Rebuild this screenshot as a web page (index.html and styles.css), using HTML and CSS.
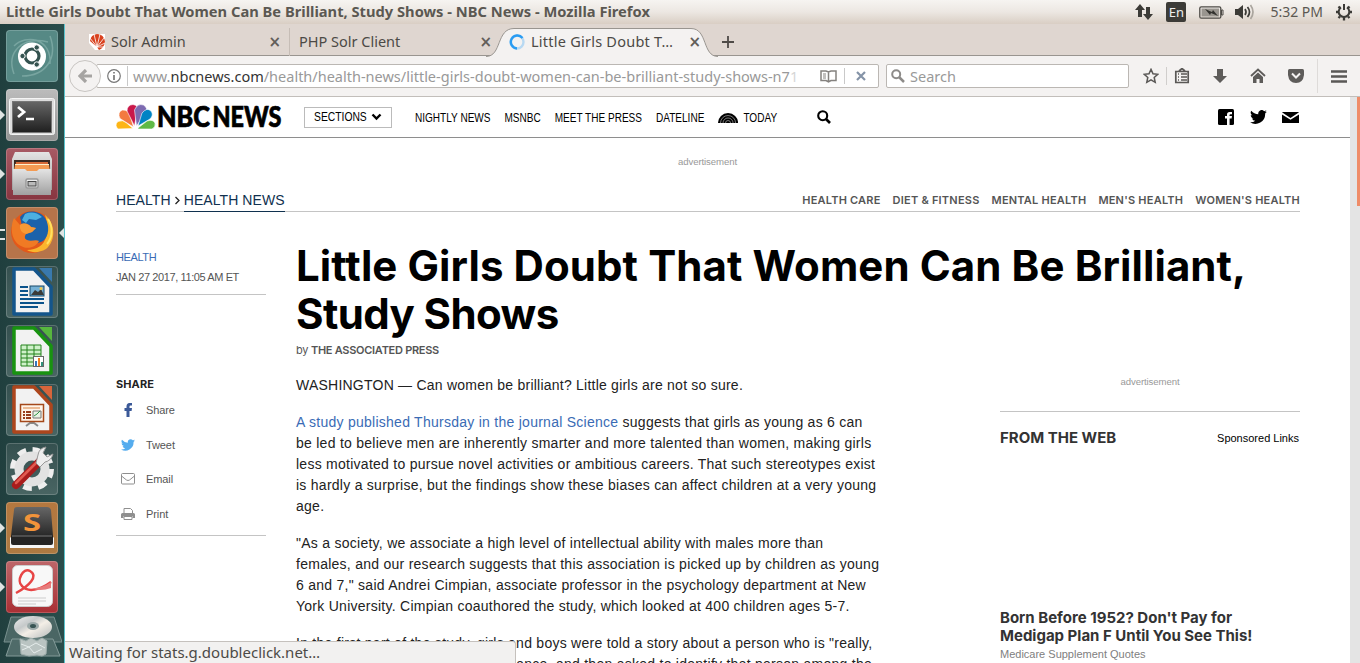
FILE: index.html
```html
<!DOCTYPE html>
<html lang="en">
<head>
<meta charset="utf-8">
<title>Little Girls Doubt That Women Can Be Brilliant, Study Shows - NBC News</title>
<link rel="stylesheet" href="styles.css">
</head>
<body>
<div class="desktop">
  <header class="panel">
    <span class="panel-title">Little Girls Doubt That Women Can Be Brilliant, Study Shows - NBC News - Mozilla Firefox</span>
    <div class="indicators">
      <svg width="18" height="18" viewBox="0 0 18 18" fill="#3c3b37"><path d="M5 1l5 6H7v7H3V7H0zM13 17l-5-6h3V4h4v7h3z"/></svg>
      <span class="lang">En</span>
      <svg class="battery" width="25" height="13" viewBox="0 0 25 13"><rect x=".8" y=".8" width="21" height="11.4" rx="1.5" fill="none" stroke="#4c4a46" stroke-width="1.3"/><rect x="2.5" y="2.5" width="17.600" height="8" fill="#99958f"/><path d="M22.500 4h1.500v5h-1.500z" fill="none" stroke="#4c4a46"/><path d="M6 3l7 3 1-2 5 6-7-3-1 2z" fill="#33322f"/></svg>
      <svg class="volume" width="20" height="18" viewBox="0 0 20 18"><path d="M0 6h3l5-4v14l-5-4H0z" fill="#3c3b37"/><g fill="none" stroke-width="1.700"><path d="M10 6q2 3 0 6M12.500 4q4 5 0 10" stroke="#3c3b37"/><path d="M15.500 2q5 7 0 14" stroke="#aaa59e"/></g></svg>
      <span class="clock">5:32 PM</span>
      <svg width="18" height="18" viewBox="0 0 18 18" fill="none" stroke="#3c3b37"><path d="M6 4.400a5.300 5.300 0 1 0 6 0" stroke-width="2"/><path d="M9 1v6" stroke-width="2"/><path d="M3.500 3.500l1.500 1.500M14.500 3.500L13 5M1 9h3M14 9h3M3.500 15l1.500-1.500M14.500 15L13 13.500M9 14v3.500" stroke-width="2.300"/></svg>
    </div>
  </header>

  <div class="workspace">
    <nav class="launcher">
      <svg width="0" height="0" class="defs"><defs>
        <linearGradient id="gray" x2="0" y2="1"><stop stop-color="#e4e4e4"/><stop offset="1" stop-color="#a0a0a0"/></linearGradient>
        <linearGradient id="dark" x2="0" y2="1"><stop stop-color="#666"/><stop offset="1" stop-color="#1f1f1f"/></linearGradient>
        <linearGradient id="disc" x2="1" y2="1"><stop stop-color="#eee"/><stop offset=".35" stop-color="#c5c9ca"/><stop offset=".55" stop-color="#f4efe7"/><stop offset="1" stop-color="#b4babb"/></linearGradient>
      </defs></svg>
      <div class="tile dash"><svg viewBox="0 0 52 52"><g fill="none" stroke="#8fb8b3" stroke-width="1.500" opacity=".6"><path d="M8 44C0 22 16 6 42 12M44 6c8 22-4 40-28 40M8 16C20 4 46 8 44 34"/></g><circle cx="26" cy="26.500" r="14" fill="#fff"/><circle cx="26" cy="26" r="7" fill="none" stroke="#34524f" stroke-width="3.200"/><g fill="#34524f" stroke="#fff"><circle cx="16.500" cy="26" r="2.700"/><circle cx="30.700" cy="17.500" r="2.700"/><circle cx="30.700" cy="34.500" r="2.700"/></g></svg></div>
      <div class="tile terminal run"><svg viewBox="0 0 52 52"><rect x="3.500" y="9.500" width="45" height="36" rx="2" fill="#ddd" stroke="#f5f5f5"/><rect x="6.500" y="12.500" width="39" height="31" fill="url(#dark)" stroke="#777"/><path d="M12 18l6 5-6 5" fill="none" stroke="#fff" stroke-width="2.800"/><path d="M20 30h8" stroke="#fff" stroke-width="2.500"/></svg></div>
      <div class="tile files run"><svg viewBox="0 0 52 52"><path d="M9 4h34l3 7v31H6V11z" fill="url(#gray)"/><path d="M8 12h36v12H8z" fill="#3a2922"/><path d="M10 14h32v9H9z" fill="#d76a38"/><path d="M9 17h34l1 6H8z" fill="#f49b53"/><path d="M9 16.500h34" stroke="#fff0cd"/><path d="M7 21h12l2 2h10l2-2h12v26H7z" fill="url(#gray)"/><rect x="20" y="31" width="12" height="9" rx="1.500" fill="#eee" stroke="#999" stroke-width="1.500"/><rect x="22" y="33.500" width="8" height="4.500" fill="#bbb" stroke="#444"/></svg></div>
      <div class="tile firefox run many focus"><svg viewBox="0 0 52 52"><circle cx="26" cy="25" r="21" fill="#e3581a"/><path d="M39 8c11 9 11 26 1 34-7 4-14 4-19 1 10 0 17-5 19-13 1-7 2-13-1-22z" fill="#fbb52d"/><path d="M14 10C20 2 34 3 39 11c5 8 4 18-2 23-7 4-14 3-18-2z" fill="#1b62ab"/><path d="M19 7q9-4 17 3l-6 3-7-1-3 4-4-3z" fill="#4dafe1"/><path d="M42 12c5 8 5 18-1 25" fill="none" stroke="#ffe162" stroke-width="2"/><path d="M8 11l6 7c5-3 9-1 11 2l5 1-4 4-6 2q-3 4 1 6c5 2 8-1 12 1-3 6-11 9-18 5C5 34 4 20 8 11z" fill="#f07a24"/><path d="M14 18c4-3 8-1 11 2l5 1-4 4-6 2q-7-2-6-9z" fill="#f69a36"/></svg></div>
      <div class="tile doc"><svg viewBox="0 0 52 52"><path d="M8 3h20l17 18v27H8z" fill="#f2f2f2" stroke="#14558b" stroke-width="3.500" stroke-linejoin="round"/><path d="M33 2h13v14z" fill="#3979ad"/><path d="M14 21h8M14 25h8M14 29h8M14 33h24M14 37h24M14 41h18" stroke="#0b538b" stroke-width="2"/><rect x="24" y="20" width="14" height="10" fill="#76b1d5" stroke="#174968"/><path d="M25 29l4-5 3 2 3-3 3 6z" fill="#3b3b38"/><circle cx="35" cy="22.500" r="1.500" fill="#f2c84b"/></svg></div>
      <div class="tile doc"><svg viewBox="0 0 52 52"><path d="M8 3h20l17 18v27H8z" fill="#f2f2f2" stroke="#189310" stroke-width="3.500" stroke-linejoin="round"/><path d="M33 2h13v14z" fill="#57b63e"/><path d="M15 20h20v21H15z" fill="#cff1ca" stroke="#25831d"/><path d="M15 25h20M15 29h20M15 33h20M15 37h20M21 20v21M28 20v21" stroke="#25831d"/><rect x="27.500" y="31.500" width="10" height="10" fill="#fff" stroke="#666"/><path d="M29 36h2v5h-2z" fill="#3577bd"/><path d="M32 33h2v8h-2z" fill="#ef7e22"/><path d="M35 37h2v4h-2z" fill="#32927d"/></svg></div>
      <div class="tile doc"><svg viewBox="0 0 52 52"><path d="M8 3h20l17 18v27H8z" fill="#f2f2f2" stroke="#ad461d" stroke-width="3.500" stroke-linejoin="round"/><path d="M33 2h13v14z" fill="#d7653b"/><path d="M20 42l4-3h4l4 3M26 36v4" fill="none" stroke="#888" stroke-width="2"/><rect x="14.500" y="20.500" width="23" height="17" fill="#fff4e8" stroke="#a4481a" stroke-width="1.500"/><path d="M17 24h17" stroke="#d98142"/><path d="M17 28h8M17 31h8M17 34h8" stroke="#983d1b" stroke-width="2" stroke-dasharray="2 1 6"/><path d="M27 34v-7h8v7z" fill="#e7f2e3" stroke="#777"/><path d="M28 32l3-2 3-3" fill="none" stroke="#309348"/></svg></div>
      <div class="tile doc"><svg viewBox="0 0 52 52"><circle cx="26" cy="26" r="19" fill="none" stroke="#eee" stroke-width="6" stroke-dasharray="8.500 6.423"/><circle cx="26" cy="26" r="13" fill="none" stroke="#e2e2e2" stroke-width="9"/><path d="M10 42l24-24" stroke="#a91c1c" stroke-width="8" stroke-linecap="round"/><path d="M10 40l23-23" stroke="#e15a50" stroke-width="2.500" stroke-linecap="round"/><path d="M30 20l4 4 5-5q6-1 8-8l-6 3-4-4 3-6q-7 1-8 8z" fill="#eee" stroke="#999"/></svg></div>
      <div class="tile sublime run"><svg viewBox="0 0 52 52"><path d="M4 36l4-5h36l4 5v10H4z" fill="#f6f6f6"/><path d="M8 8q0-3 3-3h30q3 0 4 3l2 26q0 4-4 4H9q-4 0-4-4z" fill="url(#dark)"/><path d="M5 34h42v7q0 2-2 2H7q-2 0-2-2z" fill="#242424"/><path d="M6 34h40" stroke="#777"/><text x="17" y="29" textLength="18" lengthAdjust="spacingAndGlyphs" class="sublime-s">S</text></svg></div>
      <div class="tile reader run"><svg viewBox="0 0 52 52"><rect x="6.500" y="4.500" width="40" height="41" rx="5" fill="#f8f8f8" stroke="#ccc"/><path d="M10 32C23 25 33 15 24 10c-7-4-14 10-8 15 6 7 18 4 29-4" fill="none" stroke="#e74545" stroke-width="2.500"/><path d="M25 27q10 1 20-6v6q-11 4-20 0" fill="#e77b7b"/><path d="M12 37h28M12 40h28M12 43h18" stroke="#ccc"/></svg></div>
      <svg class="trash" width="60" height="48" viewBox="0 0 60 48"><path d="M9 3h43l8 25H2z" fill="#4a6664" stroke="#78908e"/><path d="M10 25h41l7 17H4z" fill="#4f6b69" stroke="#849b99"/><path d="M18 25l6 2 5-3 6 3 5-3 5 3-1 13-4 2-5-1-8 1-8-2z" fill="#bac4c2" stroke="#a0afad"/><path d="M19 30l8 3 7-4 9 5M20 36l7-3 5 6 8-4" stroke="#e5eceb" fill="none"/><ellipse cx="31" cy="13" rx="19" ry="11" fill="url(#disc)"/><ellipse cx="31" cy="12" rx="6" ry="4" fill="#9ba9a9"/><ellipse cx="31" cy="12" rx="3" ry="2" fill="#395554"/></svg>
    </nav>

    <main class="browser">
      <div class="tabs">
        <div class="tab first"><svg width="16" height="16" viewBox="0 0 16 16"><path d="M0 0h16v16H6L0 9z" fill="#fff"/><path d="M1 7A8 8 0 0 1 8 0q7 0 8 8-1 6-6 8l-2-3z" fill="#d9411e"/><path d="M8 13L1 4M8 13L5 0M8 13L11 0M8 13l7-9M8 13l8-4M8 13H16" stroke="#fff" stroke-width=".8"/></svg><span>Solr Admin</span><i class="close">×</i></div>
        <div class="tab second"><span>PHP Solr Client</span><i class="close">×</i></div>
        <div class="tab active"><svg class="tab-shape" width="232" height="29" viewBox="0 0 232 29"><path d="M0 28.500C16 28.500 10 .5 28 .5H205C222 .5 216 28.500 232 28.500" fill="#f4f2f1" stroke="#999590"/></svg><svg width="16" height="16" viewBox="0 0 16 16" fill="none" stroke-width="2.400"><circle cx="8" cy="8" r="6.500" stroke="#b8d9f2"/><path d="M8 14.500A6.500 6.500 0 1 1 13.500 4" stroke="#2a9cf2"/></svg><span>Little Girls Doubt T…</span><i class="close">×</i></div>
        <svg class="new-tab" width="12" height="12" viewBox="0 0 12 12"><path d="M6 0v12M0 6h12" stroke="#4f4b47" stroke-width="1.800"/></svg>
      </div>

      <div class="toolbar">
        <div class="back"><svg width="14" height="14" viewBox="0 0 14 14"><path d="M8 1L2 7l6 6M2 7h12" fill="none" stroke="#a6a4a2" stroke-width="3.200"/></svg></div>
        <div class="url">
          <svg width="14" height="14" viewBox="0 0 14 14" fill="none" stroke="#777"><circle cx="7" cy="7" r="6.300" stroke-width="1.200"/><path d="M7 3v1.600M7 6v5" stroke-width="1.700"/></svg>
          <span class="url-text">www.<b>nbcnews.com</b>/health/health-news/little-girls-doubt-women-can-be-brilliant-study-shows-n7<i>1</i></span>
          <svg class="book" width="17" height="13" viewBox="0 0 17 13" fill="none" stroke="#85827f" stroke-width="1.500"><path d="M1 1h5l2.500 1L11 1h5v9.500h-5L8.500 12 6 10.500H1zM8.500 2v9"/><path d="M3 4h3M3 6h3M3 8h3" stroke-width="1"/></svg>
          <span class="divider"></span>
          <svg width="10" height="10" viewBox="0 0 10 10"><path d="M1 1l8 8M9 1L1 9" stroke="#8493a7" stroke-width="2.200"/></svg>
        </div>
        <div class="search"><svg width="14" height="14" viewBox="0 0 14 14" fill="none" stroke="#8d8b89"><circle cx="5.200" cy="5.200" r="4" stroke-width="2"/><path d="M8 8l5 5" stroke-width="2.500"/></svg><span>Search</span></div>
        <div class="tools">
          <svg width="16" height="16" viewBox="0 0 16 16"><path d="M8 1.400l2 4.400 4.800.5-3.600 3.200 1 4.800L8 11.900l-4.200 2.400 1-4.800L1.200 6.300 6 5.800z" fill="none" stroke="#5a5856" stroke-width="1.500"/></svg>
          <span class="tool-rule"></span>
          <svg width="16" height="16" viewBox="0 0 16 16"><path d="M1.800 3.500h12.400v11H1.800zM5 3l3-2.500L11 3" fill="none" stroke="#5a5856" stroke-width="1.700"/><path d="M4 6h1M7 6h6M4 9h1M7 9h6M4 12h1M7 12h6" stroke="#5a5856" stroke-width="1.500"/></svg>
          <svg width="16" height="16" viewBox="0 0 16 16"><path d="M5 1h6v7h4l-7 7-7-7h4z" fill="#5e5c5a"/></svg>
          <svg width="16" height="16" viewBox="0 0 16 16"><path d="M1 8l7-6.500L15 8" fill="none" stroke="#5e5c5a" stroke-width="1.800"/><path d="M3 9l5-4.500L13 9v6H9.500v-4h-3v4H3z" fill="#5e5c5a"/></svg>
          <svg width="16" height="16" viewBox="0 0 16 16"><path d="M0 2.500Q0 1 1.500 1h13Q16 1 16 2.500V7q-1 8-8 8T0 7z" fill="#5e5c5a"/><path d="M4 5.500l4 4 4-4" fill="none" stroke="#f4f2f1" stroke-width="2"/></svg>
          <span class="menu-rule"></span>
          <svg width="16" height="13" viewBox="0 0 16 13"><path d="M0 1.500h16M0 6.500h16M0 11.500h16" stroke="#5a5856" stroke-width="2.600"/></svg>
        </div>
      </div>

      <div class="viewport">
        <div class="page">
          <div class="site-header">
            <svg class="logo" width="166" height="26" viewBox="0 0 166 26">
              <g stroke="#fff" stroke-width=".6">
                <path d="M17 24.500L2 25q-4-4 0-7.500 5-2 8 1z" fill="#fdb515"/><path d="M17.500 23L4 14.500Q1 8 6.500 6q6 0 7.500 5z" fill="#f37a40"/><path d="M18.500 22L11 7q0-6 6-6.500 6 1 4 7z" fill="#c9184a"/><path d="M20.500 22L18.500 6q3-7 9-5 5 3 2 8z" fill="#7d6bb1"/><path d="M22 22L26 9q5-6 9-2 3 4-1 8z" fill="#0083c4"/><path d="M22 24l9-7q6-2 8 2 1 4-3 6H22z" fill="#5fb946"/>
              </g>
              <text class="wordmark" x="41" y="22.500" textLength="53" lengthAdjust="spacingAndGlyphs">NBC</text>
              <text class="wordmark" x="96.500" y="22.500" textLength="69" lengthAdjust="spacingAndGlyphs">NEWS</text>
            </svg>
            <div class="sections"><span>SECTIONS</span><svg width="11" height="8" viewBox="0 0 11 8"><path d="M1.500 1.500l4 4 4-4" fill="none" stroke="#000" stroke-width="2.400"/></svg></div>
            <nav class="site-nav"><span>NIGHTLY NEWS</span><span>MSNBC</span><span>MEET THE PRESS</span><span>DATELINE</span><svg width="24" height="10" viewBox="0 0 20 10" preserveAspectRatio="none"><path d="M0 10a10 10 0 0 1 20 0z"/><g fill="none" stroke="#aaa" stroke-width=".7"><path d="M2.500 10a7.500 7.500 0 0 1 15 0M5 10a5 5 0 0 1 10 0M7.500 10a2.500 2.500 0 0 1 5 0"/></g></svg><span>TODAY</span></nav>
            <svg class="find" width="14" height="14" viewBox="0 0 14 14" fill="none" stroke="#000"><circle cx="5.700" cy="5.700" r="4.500" stroke-width="2.100"/><path d="M9 9l4 4" stroke-width="2.600"/></svg>
            <div class="social">
              <svg width="16" height="16" viewBox="0 0 16 16"><rect width="16" height="16" rx="1.500"/><path d="M9 16V9.500H7V7h2V5.500Q9 3 11.500 3H14v2.300h-1.500q-1 0-1 1V7H14l-.4 2.500h-2V16z" fill="#fff"/></svg>
              <svg width="17" height="14" viewBox="0 0 24 20"><path d="M24 2.400a10 10 0 0 1-2.800.8A5 5 0 0 0 23.300.5a10 10 0 0 1-3.100 1.200 4.900 4.900 0 0 0-8.400 4.500A14 14 0 0 1 1.700 1a4.900 4.900 0 0 0 1.500 6.600A5 5 0 0 1 1 7a4.900 4.900 0 0 0 3.900 4.900 5 5 0 0 1-2.200.1 4.900 4.900 0 0 0 4.600 3.400A10 10 0 0 1 0 17.500 14 14 0 0 0 21.500 5z"/></svg>
              <svg width="17" height="11" viewBox="0 0 17 11"><path d="M.3 0h16.400v.6L8.500 6 .3.600zM0 2.500l8.500 5.300L17 2.500V11H0z"/></svg>
            </div>
          </div>

          <div class="ad-top">advertisement</div>

          <div class="crumbs">
            <div class="trail"><span>HEALTH</span><svg width="13" height="16" viewBox="0 0 13 16"><path d="M4.500 5l3.500 3.500-3.500 3.500" fill="none" stroke="#222" stroke-width="1.300"/></svg><span class="current">HEALTH NEWS</span></div>
            <nav class="topics"><span>HEALTH CARE</span><span>DIET &amp; FITNESS</span><span>MENTAL HEALTH</span><span>MEN'S HEALTH</span><span>WOMEN'S HEALTH</span></nav>
          </div>

          <div class="article">
            <aside class="meta">
              <div class="stamp"><a>HEALTH</a><time>JAN 27 2017, 11:05 AM ET</time></div>
              <div class="share">
                <h2>SHARE</h2>
                <div class="share-row"><svg width="14" height="14" viewBox="0 0 14 14"><path d="M5.500 14V8H3.500V5h2V3.500Q5.500 0 8.500 0H11v2.500H9.500Q8.500 2.500 8.500 3.500V5H11l-.4 3H8.500v6z" fill="#3b5998"/></svg><span>Share</span></div>
                <div class="share-row"><svg width="14" height="12" viewBox="0 0 24 20"><path fill="#55acee" d="M24 2.400a10 10 0 0 1-2.800.8A5 5 0 0 0 23.300.5a10 10 0 0 1-3.100 1.200 4.900 4.900 0 0 0-8.400 4.500A14 14 0 0 1 1.700 1a4.900 4.900 0 0 0 1.500 6.600A5 5 0 0 1 1 7a4.900 4.900 0 0 0 3.900 4.900 5 5 0 0 1-2.200.1 4.900 4.900 0 0 0 4.600 3.400A10 10 0 0 1 0 17.500 14 14 0 0 0 21.500 5z"/></svg><span>Tweet</span></div>
                <div class="share-row"><svg width="14" height="12" viewBox="0 0 14 12" fill="none" stroke="#8f8f8f"><rect x=".5" y=".5" width="13" height="10.500" rx="1"/><path d="M.5 3l5 4q1.500 1 3 0l5-4"/></svg><span>Email</span></div>
                <div class="share-row"><svg width="14" height="12" viewBox="0 0 14 12"><path d="M3 5V.5h6.500L11.500 2.500V5M3 8.500h8v3H3z" fill="#fff" stroke="#8f8f8f"/><path d="M1.500 5h11q1.500 0 1.500 1.500V10h-2.500V8h-9v2H0V6.500Q0 5 1.500 5" fill="#8f8f8f"/></svg><span>Print</span></div>
              </div>
            </aside>
            <section class="story">
              <h1>Little Girls Doubt That Women Can Be Brilliant,<br><span class="tight">Study Shows</span></h1>
              <p class="byline">by <b>THE ASSOCIATED PRESS</b></p>
              <div class="columns">
                <div class="copy">
                  <p class="lead">WASHINGTON — Can women be brilliant? Little girls are not so sure.</p>
                  <p><a>A study published Thursday in the journal Science</a> suggests that girls as young as 6 can<br>be led to believe men are inherently smarter and more talented than women, making girls<br>less motivated to pursue novel activities or ambitious careers. That such stereotypes exist<br>is hardly a surprise, but the findings show these biases can affect children at a very young<br>age.</p>
                  <p>"As a society, we associate a high level of intellectual ability with males more than<br>females, and our research suggests that this association is picked up by children as young<br>6 and 7," said Andrei Cimpian, associate professor in the psychology department at New<br>York University. Cimpian coauthored the study, which looked at 400 children ages 5-7.</p>
                  <p>In the first part of the study, girls and boys were told a story about a person who is "really,<br>really smart," a child's idea of brilliance, and then asked to identify that person among the</p>
                </div>
                <aside class="rail">
                  <div class="ad">advertisement</div>
                  <div class="web-head"><h3>FROM THE WEB</h3><span>Sponsored Links</span></div>
                  <h4>Born Before 1952? Don't Pay for<br>Medigap Plan F Until You See This!</h4>
                  <p class="source">Medicare Supplement Quotes</p>
                </aside>
              </div>
            </section>
          </div>
        </div>
        <div class="scrollbar"><div class="thumb"></div></div>
        <div class="status">Waiting for stats.g.doubleclick.net…</div>
      </div>
    </main>
  </div>
</div>
</body>
</html>
```
FILE: styles.css
```css
* { box-sizing: border-box; }
body { margin: 0; overflow: hidden; font-family: "Liberation Sans", Arial, sans-serif; }
svg { display: block; flex: none; }
h1, h2, h3, h4, p { margin: 0; }
.desktop { width: 1360px; height: 663px; display: flex; flex-direction: column; overflow: hidden; white-space: nowrap; }

/* Top panel */
.panel { height: 24px; flex: none; display: flex; align-items: center; justify-content: space-between; padding: 0 7px 0 6px; background: linear-gradient(#f6f4f1, #ece7e2 50%, #d9cec4); font-family: "Noto Sans", sans-serif; font-size: 14px; color: #5b5852; }
.panel-title { font-weight: 700; font-size: 14.700px; line-height: 24px; margin-top: -2px; }
.indicators { display: flex; align-items: center; }
.lang { width: 20px; height: 20px; margin-left: 13px; border-radius: 2px; background: #3c3b37; color: #eee; font-size: 13px; line-height: 20px; text-align: center; }
.battery { margin-left: 13px; }
.volume { margin-left: 11px; }
.clock { margin: -1px 12px 0 15px; }

/* Launcher */
.workspace { flex: 1; display: flex; min-height: 0; }
.launcher { width: 65px; flex: none; display: flex; flex-direction: column; gap: 7px; padding: 6px 0 0 6px; background: linear-gradient(90deg, #203f3e, #2a4d4b); border-right: 1px solid #59c3cd; }
.defs { position: absolute; }
.tile { position: relative; width: 52px; height: 52px; flex: none; border-radius: 4px; box-shadow: inset 0 0 0 1px #ffffff30; }
.tile svg { width: 52px; height: 52px; }
.dash { background: #568985; }
.terminal { background: linear-gradient(#bcbcbc, #949494); }
.files { background: linear-gradient(#a85a64, #873540); }
.firefox { background: #b6744a; }
.doc { background: linear-gradient(#35504f, #496563); }
.sublime { background: linear-gradient(#b4783f, #ad7a42); }
.reader { background: linear-gradient(#bd6669, #a92f34); }
.run::before { content: ""; position: absolute; left: -6px; top: 21px; border: 5px solid transparent; border-left-color: #dfe4e3; border-right: 0; }
.many::before { top: 22px; width: 5px; height: 7px; border: solid #dfe4e3; border-width: 2px 0; }
.focus::after { content: ""; position: absolute; right: -6px; top: 21px; border: 5px solid transparent; border-right-color: #dfe4e3; border-left: 0; }
.sublime-s { font: bold 24px "Open Sans", sans-serif; fill: #f2933a; }
.trash { margin: -6px 0 0 -4px; }

/* Browser tabs */
.browser { flex: 1; display: flex; flex-direction: column; min-width: 0; }
.tabs { height: 32px; flex: none; display: flex; align-items: center; background: #dfd6d0; border-bottom: 1px solid #999590; font: 14.500px "Noto Sans", sans-serif; color: #4c4a46; padding: 4px 0 0 24px; }
.tab { display: flex; align-items: center; height: 28px; position: relative; }
.tab span { margin: -2px 0 0 6px; }
.close { margin-left: auto; font: bold 15px "DejaVu Sans", sans-serif; color: #625e5a; }
.first { width: 201px; padding-right: 8px; border-right: 1px solid #c6bdb6; }
.second { width: 208px; padding: 0 6px 0 3px; }
.active { width: 204px; padding: 0 1px 0 11px; }
.active span { letter-spacing: .24px; }
.active > * { position: relative; }
.active .tab-shape { position: absolute; left: -12px; top: 0; }
.new-tab { margin-left: 20px; }

/* Toolbar */
.toolbar { height: 41px; flex: none; display: flex; align-items: center; background: #f4f2f1; border-bottom: 1px solid #c2beba; padding-left: 4px; font: 14.500px "Noto Sans", sans-serif; color: #999; }
.back { z-index: 1; width: 32px; height: 32px; border-radius: 50%; border: 1px solid #c8c5c2; background: #f4f2f1; display: flex; align-items: center; justify-content: center; }
.url, .search { height: 24px; border: 1px solid #bbb7b3; background: #fff; border-radius: 2px; display: flex; align-items: center; }
.url { width: 783px; margin-left: -5px; padding-left: 10px; }
.url-text { width: 673px; flex: none; overflow: hidden; margin-left: 6px; border-left: 1px solid #c9c9c9; padding-left: 5px; line-height: 20px; }
.url b { font-weight: 400; color: #333; }
.url i { font-style: normal; opacity: .4; }
.book { margin-left: 20px; }
.divider { width: 1px; height: 16px; margin: 0 11px 0 7px; background: #c9c9c9; }
.search { width: 243px; margin-left: 7px; padding-left: 4px; gap: 5px; }
.tools { display: flex; align-items: center; height: 100%; margin-left: 14px; gap: 22px; }
.tool-rule { width: 1px; height: 18px; margin: 0 -15px; background: #d0cecc; }
.menu-rule { width: 1px; height: 34px; margin: 0 -9px; background: #dedbd9; }

/* Site header */
.viewport { flex: 1; display: flex; position: relative; min-height: 0; overflow: hidden; background: #fff; }
.page { width: 1285px; flex: none; }
.site-header { height: 41px; display: flex; align-items: center; padding: 0 51px; border-bottom: 1px solid #8e8e8e; }
.logo { overflow: visible; }
.wordmark { font: 900 28.500px Lato, sans-serif; stroke: #000; stroke-width: .7px; }
.sections { width: 88px; height: 21px; margin-left: 22px; display: flex; align-items: center; justify-content: space-between; padding: 0 9px; border: 1px solid #bbb; font-size: 12px; }
.sections span { transform: scaleX(.86); transform-origin: left; margin-right: -9px; }
.site-nav { width: 433px; display: flex; align-items: center; gap: 16.700px; margin: 1px -70px 0 23px; font-size: 12px; transform: scaleX(.837); transform-origin: left; }
.site-nav svg + span { margin-left: -10.700px; }
.find { margin-left: 39px; }
.social { display: flex; align-items: center; gap: 15.500px; margin-left: auto; }

/* Article */
.ad-top, .ad { font-size: 9.600px; letter-spacing: -.1px; color: #999; text-align: center; line-height: 12px; }
.ad-top { padding-top: 18px; }
.crumbs { display: flex; justify-content: space-between; margin: 24px 50px 0 51px; height: 20px; border-bottom: 1px solid #c4c4c4; line-height: 16px; }
.trail { font-size: 14px; color: #10314f; display: flex; letter-spacing: .08px; }
.current { height: 20px; border-bottom: 1px solid #10314f; }
.topics { display: flex; gap: 12px; font: 600 11px/16px Inter, sans-serif; letter-spacing: .22px; color: #555; }
.article { display: grid; grid-template-columns: 150px 1004px; gap: 30px; margin: 30px 0 0 51px; }
.stamp { height: 53px; border-bottom: 1px solid #c4c4c4; display: flex; flex-direction: column; padding-top: 5px; font-size: 11px; letter-spacing: -.4px; line-height: 20px; color: #555; }
.stamp a, .copy a { color: #3a6bb5; }
.share { margin-top: 79px; height: 162px; border-bottom: 1px solid #c4c4c4; }
.share h2 { font: 700 11px/20px Inter, sans-serif; letter-spacing: .1px; color: #222; margin-bottom: -1px; }
.share-row { display: flex; align-items: center; height: 34.600px; padding-left: 5px; gap: 11px; font-size: 11px; letter-spacing: -.1px; color: #555; }
h1 { font: 700 42px/48px Inter, sans-serif; letter-spacing: .09px; color: #000; }
.tight { letter-spacing: -.6px; }
.byline { font: 11px/16px Inter, sans-serif; letter-spacing: -.28px; color: #555; padding-top: 4px; }
.byline b { font-weight: 600; }
.columns { display: flex; justify-content: space-between; margin-top: 17px; }
.copy { width: 584px; font-size: 14px; letter-spacing: .263px; line-height: 21px; color: #222; }
.copy p { margin-bottom: 16px; }
.lead { letter-spacing: .23px; }
.rail { width: 300px; padding-top: 1px; }
.web-head { display: flex; justify-content: space-between; align-items: center; height: 52px; margin-top: 23px; border-top: 1px solid #c4c4c4; font-size: 11px; color: #000; padding-right: 1px; }
.rail h3 { font: 700 15px Inter, sans-serif; color: #333; }
.rail h4 { font: 700 15px/18px Inter, sans-serif; color: #333; margin-top: 146px; }
.source { font-size: 11px; line-height: 18px; color: #808080; }
.scrollbar { width: 10px; background: #e4e4e4; display: flex; justify-content: flex-end; }
.thumb { width: 3px; height: 109px; background: #ef8c68; }
.status { position: absolute; left: 0; bottom: 0; width: 451px; height: 22px; background: #f2f1f0; border: 1px solid #c5c1bd; border-width: 1px 1px 0 0; border-top-right-radius: 3px; padding-left: 4px; font: 15px/21px "Noto Sans", sans-serif; color: #4c4a46; }
```
